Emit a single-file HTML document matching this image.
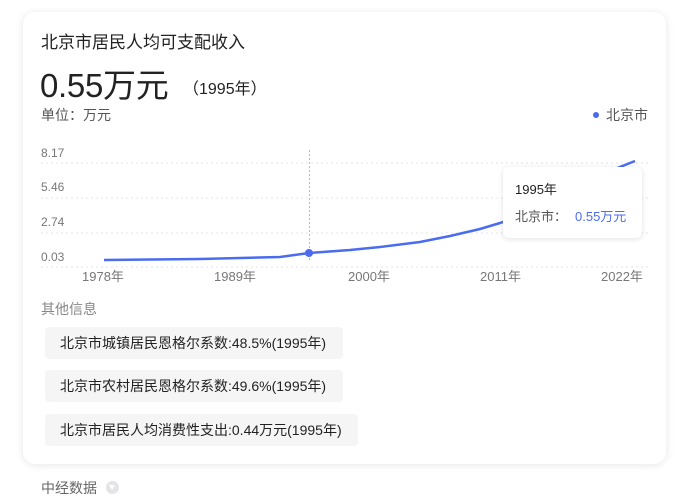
<!DOCTYPE html>
<html><head><meta charset="utf-8"><style>
*{margin:0;padding:0;box-sizing:border-box}
body{width:700px;height:504px;background:#fff;font-family:"Liberation Sans","Noto Sans CJK SC",sans-serif;position:relative;overflow:hidden}
.card{position:absolute;left:23px;top:12px;width:643px;height:452px;border-radius:12px;background:#fff;box-shadow:0 1px 8px rgba(0,0,0,0.1)}
.a{position:absolute;white-space:nowrap}
.chip{position:absolute;left:45px;height:32px;background:#f5f5f6;border-radius:4px;font-size:14px;color:#222;padding-left:15px;line-height:32px}
</style></head><body>
<div class="card"></div>
<div class="a" style="left:41px;top:28px;font-size:17px;color:#222">北京市居民人均可支配收入</div>
<div class="a" style="left:40px;top:59px;font-size:33px;color:#222;letter-spacing:-0.3px">0.55万元</div>
<div class="a" style="left:183px;top:75px;font-size:16px;color:#222">（1995年）</div>
<div class="a" style="left:41px;top:105px;font-size:14px;color:#555">单位：万元</div>
<div class="a" style="left:593px;top:112px;width:6px;height:6px;border-radius:3px;background:#4b6cf0"></div>
<div class="a" style="left:606px;top:105px;font-size:14px;color:#555">北京市</div>
<svg class="a" style="left:0;top:0" width="700" height="300">
<g stroke="#e4e4e8" stroke-dasharray="2,3" stroke-width="1">
<line x1="41" y1="163" x2="648" y2="163"/><line x1="41" y1="198" x2="648" y2="198"/><line x1="41" y1="233" x2="648" y2="233"/><line x1="41" y1="267" x2="648" y2="267"/></g>
<line x1="309.5" y1="150" x2="309.5" y2="262" stroke="#bbb" stroke-dasharray="2,2"/>
<g font-size="12" fill="#777" font-family="Liberation Sans,Noto Sans CJK SC,sans-serif">
<text x="41" y="157">8.17</text><text x="41" y="191">5.46</text><text x="41" y="226">2.74</text><text x="41" y="261">0.03</text>
<text x="82" y="281" font-size="13">1978年</text><text x="214" y="281" font-size="13">1989年</text><text x="348" y="281" font-size="13">2000年</text><text x="480" y="281" font-size="13">2011年</text><text x="601" y="281" font-size="13">2022年</text></g>
<path d="M104,260 L200,259 L280,257 L309,253 L350,250 L380,247 L420,242 L450,236 L480,229 L500,223 L520,216 L550,206 L585,188 L610,171 L635,161" fill="none" stroke="#4b6cf0" stroke-width="2.5"/>
<circle cx="309" cy="253" r="4" fill="#4b6cf0"/>
</svg>
<div class="a" style="left:503px;top:167px;width:139px;height:71px;background:#fff;border-radius:6px;box-shadow:0 1px 6px rgba(0,0,0,0.12)"></div>
<div class="a" style="left:515px;top:179px;font-size:13px;color:#222">1995年</div>
<div class="a" style="left:515px;top:206px;font-size:13px;color:#555">北京市：</div>
<div class="a" style="left:575px;top:206px;font-size:13px;color:#4b6cf0">0.55万元</div>
<div class="a" style="left:41px;top:299px;font-size:14px;color:#888">其他信息</div>
<div class="chip" style="top:327px;width:298px">北京市城镇居民恩格尔系数:48.5%(1995年)</div>
<div class="chip" style="top:370px;width:298px">北京市农村居民恩格尔系数:49.6%(1995年)</div>
<div class="chip" style="top:414px;width:313px">北京市居民人均消费性支出:0.44万元(1995年)</div>
<div class="a" style="left:41px;top:478px;font-size:14px;color:#666">中经数据</div>
<div class="a" style="left:106px;top:481px;width:13px;height:13px;border-radius:7px;background:#e4e4e6"></div>
<div class="a" style="left:109px;top:485px;width:0;height:0;border-left:3.5px solid transparent;border-right:3.5px solid transparent;border-top:5px solid #fff"></div>
</body></html>
